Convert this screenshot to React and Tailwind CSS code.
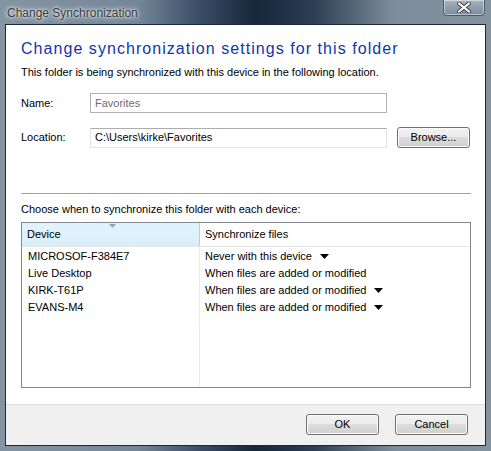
import React from 'react';

const font = { fontFamily: '"Segoe UI", "Liberation Sans", Arial, sans-serif' };

function Caret({ className = '' }) {
  return (
    <svg width="9" height="5" viewBox="0 0 9 5" className={className}>
      <path d="M0 0 H9 L4.5 5 Z" fill="#000" />
    </svg>
  );
}

function WinButton({ children, className = '' }) {
  return (
    <div
      className={`h-[21px] w-[73px] rounded-[3px] border border-[#707070] bg-[linear-gradient(180deg,#f2f2f2_0%,#ebebeb_49%,#dddddd_50%,#cfcfcf_100%)] shadow-[inset_0_0_0_1px_#fcfcfc] flex items-center justify-center text-[11px] text-black ${className}`}
    >
      {children}
    </div>
  );
}

export default function App() {
  const devices = [
    { name: 'MICROSOF-F384E7', sync: 'Never with this device', caret: true },
    { name: 'Live Desktop', sync: 'When files are added or modified', caret: false },
    { name: 'KIRK-T61P', sync: 'When files are added or modified', caret: true },
    { name: 'EVANS-M4', sync: 'When files are added or modified', caret: true },
  ];

  return (
    <div
      style={font}
      className="relative w-[491px] h-[451px] overflow-hidden bg-[linear-gradient(90deg,#8494a2_0%,#74879a_28%,#3c5068_40%,#16263b_52%,#2c3f55_64%,#7d8c9a_80%,#8593a0_100%)]"
    >
      {/* Title bar */}
      <div className="h-[24px] flex items-start justify-between">
        <div className="pl-[7px] pt-[4px] text-[12px] text-[#3c3c3c] [text-shadow:0_0_6px_#ffffff,0_0_3px_#ffffff]">
          Change Synchronization
        </div>
        <div className="relative -mt-[1px] mr-[6px] w-[42px] h-[17px] rounded-b-[4px] border border-[#505a66] bg-[linear-gradient(180deg,#a9b5c0_0%,#8f9ead_50%,#7e8d9c_100%)] shadow-[inset_0_0_0_1px_rgba(255,255,255,0.45)] flex items-center justify-center">
          <svg width="14" height="11" viewBox="0 0 14 11">
            <path d="M2 1.5 L12 9.5 M12 1.5 L2 9.5" stroke="#3a3f47" strokeWidth="4" strokeLinecap="round" />
            <path d="M2 1.5 L12 9.5 M12 1.5 L2 9.5" stroke="#ffffff" strokeWidth="2.2" strokeLinecap="round" />
          </svg>
        </div>
      </div>

      {/* Client area */}
      <div className="ml-[5px] w-[481px] h-[422px] border border-[#1e2a38] flex flex-col">
        <div className="flex-1 bg-white pl-[15px] pr-[15px] pt-[14px] flex flex-col">
          <div className="h-[20px] leading-[20px] text-[16px] tracking-[1.05px] text-[#0f36b0]">
            Change synchronization settings for this folder
          </div>
          <div className="mt-[5px] h-[16px] leading-[16px] text-[11px] text-black">
            This folder is being synchronized with this device in the following location.
          </div>

          <div className="mt-[13px] flex items-center h-[20px]">
            <div className="w-[69px] text-[11px] text-black">Name:</div>
            <div className="w-[297px] h-[20px] border border-[#adb2b5] bg-white px-[4px] flex items-center text-[11px] text-[#6d6d6d]">
              Favorites
            </div>
          </div>

          <div className="mt-[14px] flex items-center h-[21px]">
            <div className="w-[69px] text-[11px] text-black">Location:</div>
            <div className="w-[297px] h-[20px] border border-[#e2e3ea] border-t-[#abadb3] bg-white px-[4px] flex items-center text-[11px] text-black">
              C:\Users\kirke\Favorites
            </div>
            <WinButton className="ml-[10px]">Browse...</WinButton>
          </div>

          <div className="mt-[45px] w-[450px] h-px bg-[#a0a0a0]" />

          <div className="mt-[7px] h-[16px] leading-[16px] text-[11px] text-black">
            Choose when to synchronize this folder with each device:
          </div>

          <div className="mt-[5px] w-[450px] h-[166px] border border-[#828790] bg-white flex flex-col">
            <div className="flex h-[24px] border-b border-[#e5e5e5]">
              <div className="relative w-[178px] border-r border-[#96d9f9] bg-[linear-gradient(180deg,#e3f3fd_0%,#d9edfa_100%)] pl-[5px] flex items-center text-[11px] text-black">
                Device
                <svg width="7" height="4" viewBox="0 0 7 4" className="absolute left-[87px] top-[1px]">
                  <path d="M0 0 H7 L3.5 4 Z" fill="#8fa4bd" />
                </svg>
              </div>
              <div className="flex-1 pl-[5px] flex items-center text-[11px] text-black">
                Synchronize files
              </div>
            </div>
            <div className="flex flex-1">
              <div className="w-[178px] border-r border-[#ececec] pt-[1px]">
                {devices.map((d) => (
                  <div key={d.name} className="h-[17px] pl-[6px] flex items-center text-[11px] text-black">
                    {d.name}
                  </div>
                ))}
              </div>
              <div className="flex-1 pt-[1px]">
                {devices.map((d) => (
                  <div key={d.name} className="h-[17px] pl-[5px] flex items-center text-[11px] text-black">
                    {d.sync}
                    {d.caret && <Caret className="ml-[8px]" />}
                  </div>
                ))}
              </div>
            </div>
          </div>
        </div>

        <div className="h-[41px] border-t border-[#dfdfdf] bg-[#f0f0f0] flex items-start justify-end pt-[9px] pr-[17px] gap-[16px]">
          <WinButton>OK</WinButton>
          <WinButton>Cancel</WinButton>
        </div>
      </div>
    </div>
  );
}
